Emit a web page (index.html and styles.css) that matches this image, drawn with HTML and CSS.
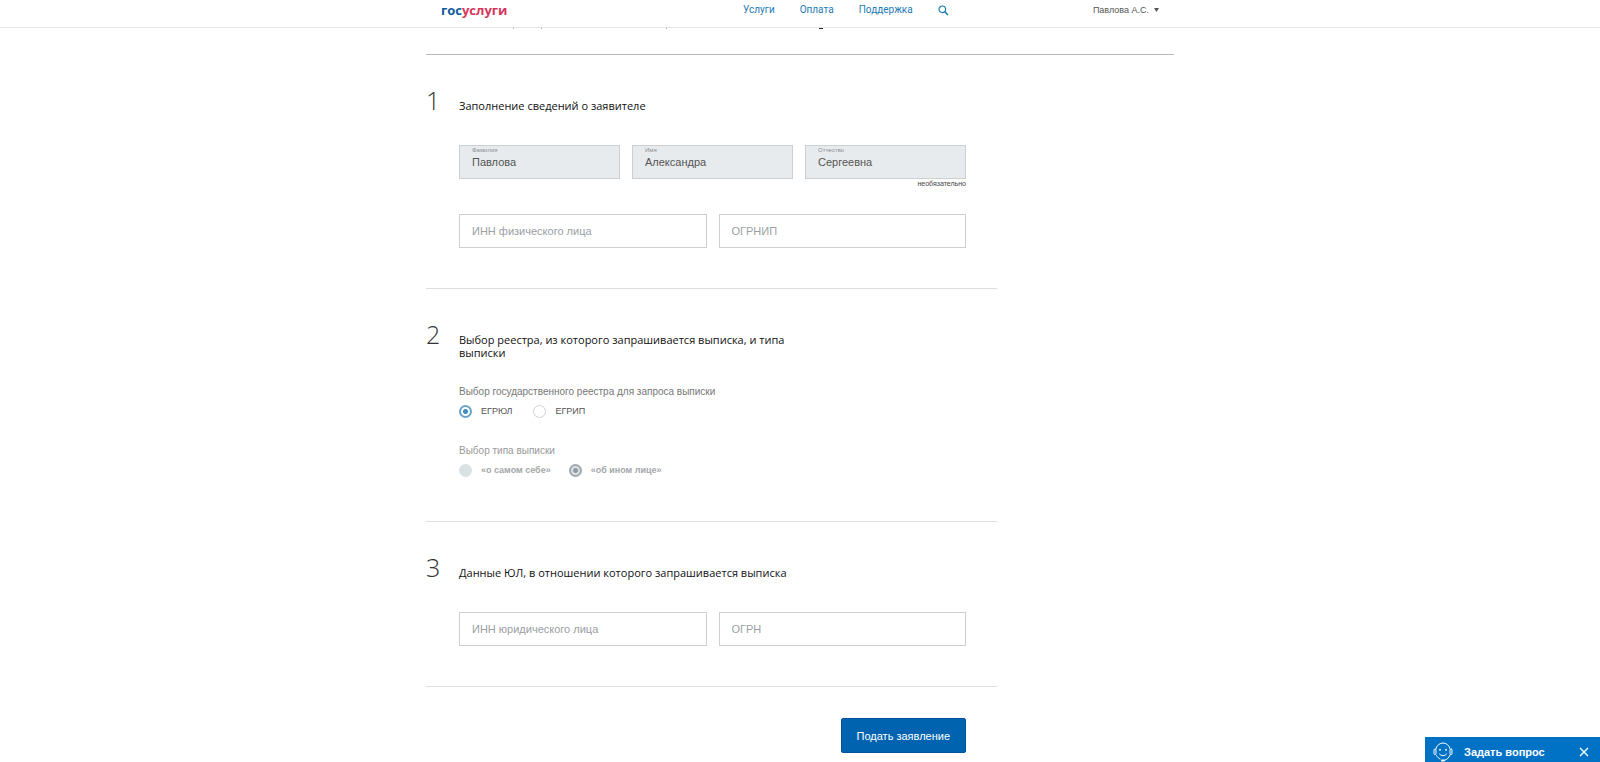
FILE: index.html
```html
<!DOCTYPE html>
<html lang="ru">
<head>
<meta charset="utf-8">
<title>Госуслуги</title>
<link rel="stylesheet" href="styles.css">
</head>
<body>
<header class="topbar">
  <div class="topbar-inner">
    <a class="logo" href="#"><span class="logo-blue">гос</span>услуги</a>
    <nav class="nav">
      <a href="#">Услуги</a>
      <a href="#">Оплата</a>
      <a href="#">Поддержка</a>
      <button class="search" type="button" aria-label="Поиск">
        <svg width="11" height="11" viewBox="0 0 11 11" fill="none" stroke="currentColor"><circle cx="4.3" cy="4.3" r="3.3" stroke-width="1.2"/><path d="M6.8 6.8L10 10" stroke-width="1.6"/></svg>
      </button>
    </nav>
    <button class="user" type="button">Павлова А.С.<svg width="5" height="4" viewBox="0 0 5 4" fill="currentColor"><path d="M0 0h5L2.5 4z"/></svg></button>
  </div>
</header>
<main class="page">
  <div class="page-head">
    <svg class="head-marks" width="400" height="1" viewBox="0 0 400 1"><path d="M87 0h1v1h-1zM115 0h1v1h-1zM240 0h1v1h-1z" fill="#aaa"/><path d="M393 0h4v1h-4z" fill="#222"/></svg>
  </div>
  <form class="form">
    <section class="step">
      <span class="num">1</span>
      <div class="body">
        <h2>Заполнение сведений о заявителе</h2>
        <div class="row">
          <div class="field filled"><label for="f1">Фамилия</label><input id="f1" type="text" value="Павлова" readonly></div>
          <div class="field filled"><label for="f2">Имя</label><input id="f2" type="text" value="Александра" readonly></div>
          <div class="field filled"><label for="f3">Отчество</label><input id="f3" type="text" value="Сергеевна" readonly><span class="hint">необязательно</span></div>
        </div>
        <div class="row row-next">
          <div class="field"><input type="text" aria-label="ИНН физического лица" placeholder="ИНН физического лица"></div>
          <div class="field"><input type="text" aria-label="ОГРНИП" placeholder="ОГРНИП"></div>
        </div>
      </div>
    </section>
    <section class="step">
      <span class="num">2</span>
      <div class="body">
        <h2>Выбор реестра, из которого запрашивается выписка, и типа выписки</h2>
        <fieldset>
          <legend>Выбор государственного реестра для запроса выписки</legend>
          <div class="radios">
            <label><input type="radio" name="registry" checked>ЕГРЮЛ</label>
            <label><input type="radio" name="registry">ЕГРИП</label>
          </div>
        </fieldset>
        <fieldset class="muted" disabled>
          <legend>Выбор типа выписки</legend>
          <div class="radios">
            <label><input type="radio" name="kind">«о самом себе»</label>
            <label><input type="radio" name="kind" checked>«об ином лице»</label>
          </div>
        </fieldset>
      </div>
    </section>
    <section class="step">
      <span class="num">3</span>
      <div class="body">
        <h2>Данные ЮЛ, в отношении которого запрашивается выписка</h2>
        <div class="row">
          <div class="field"><input type="text" aria-label="ИНН юридического лица" placeholder="ИНН юридического лица"></div>
          <div class="field"><input type="text" aria-label="ОГРН" placeholder="ОГРН"></div>
        </div>
      </div>
    </section>
    <div class="actions"><button class="submit" type="submit">Подать заявление</button></div>
  </form>
</main>
<aside class="chat">
  <svg class="agent" width="20" height="20" viewBox="0 0 20 20" fill="none" stroke="currentColor" stroke-linecap="round"><path d="M3 6.500C4 3 7 1 10 1s6 2 7 5.500"/><rect x="1" y="7" width="2" height="5.500" rx="1"/><rect x="17" y="7" width="2" height="5.500" rx="1"/><path d="M17 13c-1 3-3 4.500-5.500 5.300M3.500 13.500c1 1.800 2.200 2.800 3.500 3.500"/><path d="M6.500 12c2 2.300 5 2.300 7 0"/><path d="M7 7.500v.6M13 7.500v.6" stroke-width="1.600"/><path d="M9 18.600h2" stroke-width="2"/></svg>
  <button class="ask" type="button">Задать вопрос</button>
  <button class="close" type="button" aria-label="Закрыть"><svg width="10" height="10" viewBox="0 0 10 10" stroke="currentColor" stroke-width="1.400"><path d="M1 1l8 8M9 1L1 9"/></svg></button>
</aside>
</body>
</html>
```
FILE: styles.css
```css
* { box-sizing: border-box; }
body { margin: 0; background: #fff; font-family: "Liberation Sans", Arial, sans-serif; font-size: 11px; color: #222; }
button { border: 0; padding: 0; background: none; font: inherit; color: inherit; cursor: pointer; }
.topbar { border-bottom: 1px solid #e6e6e6; background: #fff; }
.topbar-inner { display: flex; align-items: center; max-width: 748px; height: 27px; margin: 0 auto; padding: 0 15px 7px; }
.logo { flex: 0 0 302px; font: 700 13px/20px "Open Sans", sans-serif; color: #d7355a; text-decoration: none; }
.logo-blue { color: #0d5a9c; }
.nav { display: flex; align-items: center; gap: 25px; font: 10px/20px Roboto, sans-serif; color: #1e7bb5; }
.nav a { color: inherit; text-decoration: none; }
.search { display: flex; }
.user { display: flex; align-items: center; gap: 5px; margin-left: auto; font-size: 9px; color: #555; }
.page { max-width: 748px; margin: 0 auto; }
.page-head { height: 27px; border-bottom: 1px solid #b9b9b9; }
.head-marks { display: block; }
.form { max-width: 571px; }
.step { display: flex; padding: 32px 31px 40px 0; border-bottom: 1px solid #dedede; }
.num { flex: 0 0 33px; font: 300 25px/26px "Open Sans", sans-serif; color: #333; }
.body { flex: 1; }
h2 { max-width: 330px; margin: 12px 0 0; font: 400 11px/13px "Open Sans", sans-serif; color: #111; }
.row { display: flex; gap: 12px; margin-top: 33px; }
.row-next { margin-top: 35px; }
.field { position: relative; flex: 1 1 0; }
.field input { display: block; width: 100%; height: 34px; padding: 0 12px; border: 1px solid #ccd0d2; border-radius: 0; background: #fff; font: 11px/14px "Liberation Sans", Arial, sans-serif; color: #555; }
.field input::placeholder { color: #9aa0a4; opacity: 1; }
.field.filled input { background: #e8ebee; }
.field label { position: absolute; left: 13px; top: 2px; font-size: 6px; line-height: 7px; color: #8a8f93; }
.hint { position: absolute; right: 0; top: 35px; font-size: 7px; line-height: 8px; color: #444; }
fieldset { min-width: 0; margin: 26px 0 0; padding: 0; border: 0; color: #555; }
legend { padding: 0; font-size: 10px; line-height: 14px; color: #777; }
.radios { display: flex; gap: 21px; margin-top: 6px; }
.radios label { display: flex; align-items: center; gap: 9px; font-size: 9px; line-height: 13px; }
.radios input { appearance: none; width: 13px; height: 13px; margin: 0; border: 1px solid #ccd3d7; border-radius: 50%; background: #fff; }
.radios input:checked { border: 2px solid #68a3ca; background: radial-gradient(circle, #3d8cbd 2px, #fff 3px); }
.muted { margin-bottom: 4px; color: #a4a8ab; }
.muted legend { color: #999; }
.muted .radios { gap: 18px; font-weight: 700; }
.muted input { border-color: #dae1e4; background: #dae1e4; }
.muted input:checked { border-color: #a0a9ae; background: radial-gradient(circle, #929ba0 2px, #dae1e4 3px); }
.actions { display: flex; justify-content: flex-end; padding: 31px 31px 0 0; }
.submit { height: 35px; padding: 0 15px; border: 1px solid #00529a; border-radius: 2px; background: #0063b0; font-size: 11px; color: #fff; }
.chat { position: fixed; right: 0; bottom: 0; display: flex; align-items: center; width: 175px; height: 25px; padding: 4px 11px 0 8px; background: #0072c6; color: #fff; }
.ask { margin-left: 11px; font-size: 11px; font-weight: 700; }
.close { display: flex; margin-left: auto; }
```
